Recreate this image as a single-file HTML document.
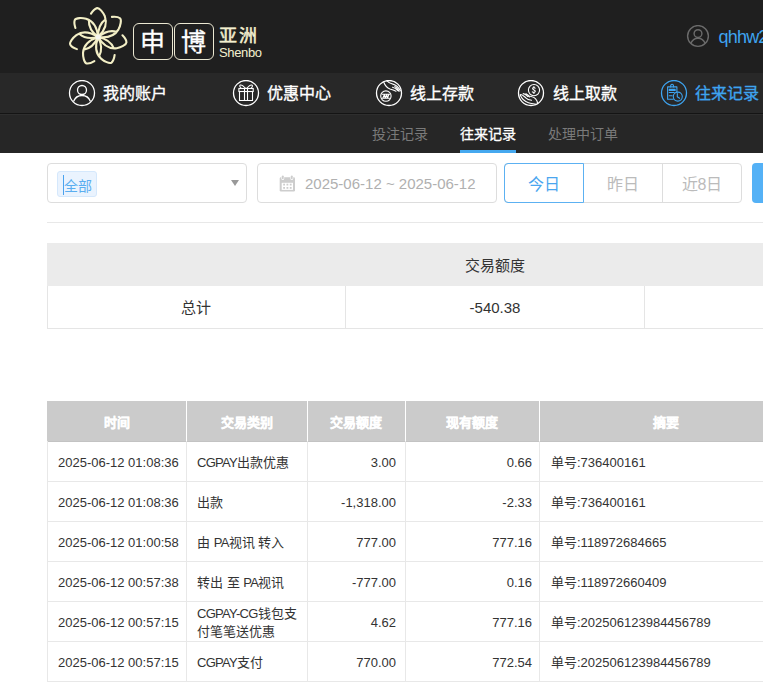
<!DOCTYPE html>
<html lang="zh-CN">
<head>
<meta charset="utf-8">
<style>
*{margin:0;padding:0;box-sizing:border-box;}
html,body{width:763px;height:686px;overflow:hidden;background:#fff;}
body{position:relative;font-family:"Liberation Sans",sans-serif;color:#333;}
.abs{position:absolute;}
#top{left:0;top:0;width:763px;height:73px;background:#1f1f1f;}
#nav{left:0;top:73px;width:763px;height:40px;background:#282828;}
#navline{left:0;top:113px;width:763px;height:1px;background:#141414;}
#navline2{left:0;top:114px;width:763px;height:1px;background:#2e2e2e;}
#sub{left:0;top:115px;width:763px;height:38px;background:#262626;}
.box{position:absolute;border:1px solid #ddd;border-radius:4px;background:#fff;}
.navt{position:absolute;top:83px;font-size:16px;line-height:22px;color:#fff;-webkit-text-stroke:0.35px currentColor;white-space:nowrap;}
.subt{position:absolute;top:124px;font-size:14px;line-height:20px;color:#7a7a7a;white-space:nowrap;}
.th{position:absolute;height:40px;display:flex;align-items:center;justify-content:center;font-size:13px;color:#fff;font-weight:bold;-webkit-text-stroke:0.3px #fff;}
.l{letter-spacing:-0.7px;}
.td{position:absolute;height:40px;display:flex;flex-direction:column;justify-content:center;font-size:13px;color:#333;white-space:nowrap;}
</style>
</head>
<body>
<div id="top" class="abs"></div>
<div id="nav" class="abs"></div>
<div id="navline" class="abs"></div>
<div id="navline2" class="abs"></div>
<div id="sub" class="abs"></div>

<!-- logo flower -->
<svg class="abs" style="left:62px;top:1px" width="72" height="72" viewBox="-36.1 -36 72 72">
  <g fill="none" stroke="#f3efc6" stroke-width="2.1" stroke-linecap="round">
    <g id="pt"><path d="M-22.7,-9 C-23.7,-12 -24,-15.5 -23.2,-17.2 C-22,-19.3 -16,-19.3 -12,-18.2 C-5.5,-16.2 -1,-10 0,0 M-9.2,-16.8 C-9.6,-11 -6.5,-5 0,0"/></g>
    <use href="#pt" transform="rotate(51.43)"/>
    <use href="#pt" transform="rotate(102.86)"/>
    <use href="#pt" transform="rotate(154.29)"/>
    <use href="#pt" transform="rotate(205.71)"/>
    <use href="#pt" transform="rotate(257.14)"/>
    <use href="#pt" transform="rotate(308.57)"/>
  </g>
  <circle cx="0" cy="0" r="2.6" fill="#f6f6f0"/>
</svg>
<!-- logo boxes -->
<div class="abs" style="left:133px;top:23px;width:40px;height:37px;border:1.6px solid #ebe8d2;border-radius:6px;color:#fff;font-size:25px;line-height:36px;text-align:center;text-indent:-2px;-webkit-text-stroke:0.3px #fff;">申</div>
<div class="abs" style="left:174px;top:23px;width:40px;height:37px;border:1.6px solid #ebe8d2;border-radius:6px;color:#fff;font-size:25px;line-height:36px;text-align:center;text-indent:-2px;-webkit-text-stroke:0.3px #fff;">博</div>
<div class="abs" style="left:218.5px;top:24px;font-size:18px;line-height:24px;color:#f3efcf;letter-spacing:2.5px;-webkit-text-stroke:0.5px #f3efcf;white-space:nowrap;">亚洲</div>
<div class="abs" style="left:219px;top:45px;font-size:13px;letter-spacing:-0.35px;line-height:16px;color:#f3efcf;white-space:nowrap;">Shenbo</div>

<!-- user top right -->
<svg class="abs" style="left:686px;top:25px" width="24" height="24" viewBox="0 0 24 24">
  <g fill="none" stroke="#6b6b6b" stroke-width="1.4">
    <circle cx="12" cy="11" r="10.4"/>
    <circle cx="12" cy="8.6" r="3.9"/>
    <path d="M4.8,18.6 C6.2,15 9,13.2 12,13.2 C15,13.2 17.8,15 19.2,18.6"/>
  </g>
</svg>
<div class="abs" style="left:718.5px;top:26px;font-size:18px;line-height:22px;color:#3ea4f0;letter-spacing:-0.8px;white-space:nowrap;">qhhw2</div>

<!-- nav icons -->
<svg class="abs" style="left:68px;top:80px" width="28" height="28" viewBox="0 0 28 28">
  <g fill="none" stroke="#fff" stroke-width="1.3">
    <circle cx="14" cy="13" r="12.5"/>
    <circle cx="14" cy="10" r="4.5"/>
    <path d="M5.5,21.5 C7,17.5 10,15.5 14,15.5 C18,15.5 21,17.5 22.5,21.5"/>
  </g>
</svg>
<div class="navt" style="left:103px;">我的账户</div>

<svg class="abs" style="left:232px;top:80px" width="28" height="28" viewBox="0 0 28 28">
  <g fill="none" stroke="#fff" stroke-width="1.3">
    <circle cx="14" cy="13" r="12.5"/>
  </g>
  <g fill="none" stroke="#fff" stroke-width="1.1">
    <rect x="6.9" y="8.5" width="14.3" height="3"/>
    <path d="M7.5,11.5 V20.5 H20.5 V11.5 M12.5,8.5 V20.5 M15.5,8.5 V20.5"/>
    <path d="M13.4,8.2 C11.5,6.2 9.6,4.6 8.4,5.1 C7.2,5.7 7.9,7.4 9.4,8.4 M14.8,8.2 C16.7,6.2 18.6,4.6 19.8,5.1 C21,5.7 20.3,7.4 18.8,8.4"/>
  </g>
</svg>
<div class="navt" style="left:267px;">优惠中心</div>

<svg class="abs" style="left:375px;top:80px" width="28" height="28" viewBox="0 0 28 28">
  <g fill="none" stroke="#fff" stroke-width="1.3">
    <circle cx="14" cy="13" r="12.5"/>
  </g>
  <g fill="none" stroke="#fff" stroke-width="1.1" stroke-linecap="round" stroke-linejoin="round">
    <circle cx="10.9" cy="16.1" r="5.2"/>
    <path d="M7.3,14.3 H14.5 M7.3,18.3 H14.5 M7.8,18.2 L9.4,14.4 L10.2,18.2 L11.7,14.4 L12.4,18.2 L13.9,14.4"/>
    <path d="M8.8,2.3 C10,5.5 12,8 15,9 C17,9.6 19,10.3 21,11.2"/>
    <path d="M12,0.8 C13.5,2.6 15.5,3.6 18.5,4.4 C21.5,5.3 23.8,7.8 25.4,10.8"/>
    <path d="M17.5,7.2 C19.3,7.6 21,8.6 22.6,10.4 L24.2,11.2 M19.8,6.6 C21.5,7.5 22.6,8.8 23.8,10.5"/>
  </g>
</svg>
<div class="navt" style="left:410px;">线上存款</div>

<svg class="abs" style="left:517px;top:80px" width="28" height="28" viewBox="0 0 28 28">
  <g fill="none" stroke="#fff" stroke-width="1.3">
    <circle cx="14" cy="13" r="12.5"/>
  </g>
  <g fill="none" stroke="#fff" stroke-width="1.1" stroke-linecap="round" stroke-linejoin="round">
    <circle cx="17" cy="10.1" r="5.6"/>
    <path d="M18.1,8.2 C17.6,7.4 15.6,7.4 15.6,8.6 C15.6,10 18.3,9.8 18.3,11.3 C18.3,12.6 16.2,12.7 15.3,11.8 M16.9,6.5 V7.4 M16.9,12.7 V13.5"/>
    <path d="M3.2,15 C4.5,18.2 7.8,21.6 11.5,22.8 C14,23.6 16.5,23.8 19,24.4"/>
    <path d="M10.5,16 C13.5,16.2 16.8,17 18.6,18.8 C19.8,20 20.5,21.8 20.6,23.6"/>
    <path d="M3.6,14.6 C5,14.2 7.2,16.4 8.8,17.8 C9.8,18.8 11.5,19.8 14.5,20.3 M6.2,13.6 C7.6,13.6 9.6,15.3 10.7,16.5 M9,13.8 C10.5,14.4 12,16 12.4,17"/>
  </g>
</svg>
<div class="navt" style="left:553px;">线上取款</div>

<svg class="abs" style="left:660px;top:80px" width="28" height="28" viewBox="0 0 28 28">
  <g fill="none" stroke="#3ea4f0" stroke-width="1.3">
    <circle cx="14" cy="13" r="12.5"/>
  </g>
  <g fill="none" stroke="#3ea4f0" stroke-width="1.1" stroke-linecap="round" stroke-linejoin="round">
    <path d="M13.2,19.2 H7.6 V6.9 H16.9 V12.2"/>
    <path d="M10.6,6.9 C10.6,5.5 11.2,4.2 12.1,4.2 C13,4.2 13.6,5.5 13.6,6.9"/>
    <path d="M9.2,9.4 H15.2 M9.2,10.4 H15.2 M9.2,12.5 H14.2 M9.2,15.8 H12.2"/>
    <circle cx="17.8" cy="16.6" r="4.5"/>
    <path d="M17.3,13.6 V16.8 L19.6,18.3"/>
  </g>
</svg>
<div class="navt" style="left:695px;color:#3ea4f0;">往来记录</div>

<!-- subnav -->
<div class="subt" style="left:372px;">投注记录</div>
<div class="subt" style="left:460px;color:#fff;-webkit-text-stroke:0.3px #fff;">往来记录</div>
<div class="abs" style="left:460px;top:150px;width:56px;height:3px;background:#45a8ef;"></div>
<div class="subt" style="left:548px;">处理中订单</div>

<!-- filter row -->
<div class="box" style="left:47px;top:163px;width:200px;height:40px;"></div>
<div class="abs" style="left:57px;top:171px;width:40px;height:26px;background:#eaf3fe;border:1px solid #d5e8fc;border-radius:3px;"></div>
<div class="abs" style="left:63px;top:175px;width:1px;height:20px;background:#4aa3ef;"></div>
<div class="abs" style="left:64px;top:176px;font-size:14px;line-height:20px;color:#5aaef0;">全部</div>
<div class="abs" style="left:231px;top:180px;width:0;height:0;border-left:4px solid transparent;border-right:4px solid transparent;border-top:6px solid #999;"></div>

<div class="box" style="left:257px;top:163px;width:240px;height:40px;"></div>
<svg class="abs" style="left:279px;top:175px" width="17" height="17" viewBox="0 0 17 17">
  <rect x="0.7" y="2.3" width="15.3" height="14.2" rx="1.3" fill="#cdcdcd"/>
  <rect x="2.7" y="7.8" width="11.3" height="7.1" fill="#fff"/>
  <g fill="#cdcdcd">
    <rect x="4.2" y="8.7" width="1.8" height="1.8"/><rect x="7.5" y="8.7" width="1.8" height="1.8"/><rect x="10.8" y="8.7" width="1.8" height="1.8"/>
    <rect x="4.2" y="12" width="1.8" height="1.8"/><rect x="7.5" y="12" width="1.8" height="1.8"/><rect x="10.8" y="12" width="1.8" height="1.8"/>
  </g>
  <rect x="2.4" y="-0.5" width="2.8" height="5.6" rx="1.4" fill="#fff"/>
  <rect x="11.4" y="-0.5" width="2.8" height="5.6" rx="1.4" fill="#fff"/>
  <rect x="2.9" y="0.4" width="1.8" height="3.8" rx="0.9" fill="#cdcdcd"/>
  <rect x="11.9" y="0.4" width="1.8" height="3.8" rx="0.9" fill="#cdcdcd"/>
</svg>
<div class="abs" style="left:305px;top:173.5px;font-size:15px;line-height:20px;color:#b0b0b0;white-space:nowrap;">2025-06-12 ~ 2025-06-12</div>

<div class="abs" style="left:504px;top:163px;width:238px;height:40px;border:1px solid #ddd;border-radius:4px;"></div>
<div class="abs" style="left:583px;top:163px;width:1px;height:40px;background:#ddd;"></div>
<div class="abs" style="left:662px;top:163px;width:1px;height:40px;background:#ddd;"></div>
<div class="abs" style="left:504px;top:163px;width:80px;height:40px;border:1px solid #5cb1f2;border-radius:4px 0 0 4px;"></div>
<div class="abs" style="left:504px;top:174.5px;width:80px;text-align:center;font-size:16px;line-height:20px;color:#4aa6ef;">今日</div>
<div class="abs" style="left:583px;top:174.5px;width:80px;text-align:center;font-size:16px;line-height:20px;color:#bbb;">昨日</div>
<div class="abs" style="left:662px;top:174.5px;width:80px;text-align:center;font-size:16px;line-height:20px;color:#bbb;">近8日</div>
<div class="abs" style="left:752px;top:163px;width:20px;height:40px;background:#54b1f6;border-radius:4px;"></div>

<div class="abs" style="left:47px;top:222px;width:716px;height:1px;background:#e8e8e8;"></div>

<!-- summary table -->
<div class="abs" style="left:47px;top:243px;width:716px;height:43px;background:#ebebeb;"></div>
<div class="abs" style="left:345px;top:256px;width:300px;text-align:center;font-size:15px;line-height:20px;color:#333;">交易额度</div>
<div class="abs" style="left:47px;top:286px;width:716px;height:43px;border-left:1px solid #e5e5e5;border-bottom:1px solid #e5e5e5;"></div>
<div class="abs" style="left:345px;top:286px;width:1px;height:42px;background:#e5e5e5;"></div>
<div class="abs" style="left:644px;top:286px;width:1px;height:42px;background:#e5e5e5;"></div>
<div class="abs" style="left:47px;top:298px;width:298px;text-align:center;font-size:15px;line-height:20px;color:#333;">总计</div>
<div class="abs" style="left:345px;top:298px;width:300px;text-align:center;font-size:15px;line-height:20px;color:#333;">-540.38</div>

<!-- main table -->
<!--MT-->
<div class="abs" style="left:47px;top:401px;width:716px;height:41px;background:#cbcbcb;"></div>
<div class="abs" style="left:47px;top:441px;width:716px;height:1px;background:#c3c3c3;"></div>
<div class="abs" style="left:186px;top:401px;width:1px;height:40px;background:#fff;"></div>
<div class="abs" style="left:307px;top:401px;width:1px;height:40px;background:#fff;"></div>
<div class="abs" style="left:405px;top:401px;width:1px;height:40px;background:#fff;"></div>
<div class="abs" style="left:539px;top:401px;width:1px;height:40px;background:#fff;"></div>
<div class="th" style="left:47px;top:401px;width:139px;">时间</div>
<div class="th" style="left:186px;top:401px;width:121px;">交易类别</div>
<div class="th" style="left:307px;top:401px;width:98px;">交易额度</div>
<div class="th" style="left:405px;top:401px;width:134px;">现有额度</div>
<div class="th" style="left:539px;top:401px;width:253px;">摘要</div>
<div class="abs" style="left:47px;top:441px;width:1px;height:240px;background:#e8e8e8;"></div>
<div class="abs" style="left:186px;top:441px;width:1px;height:240px;background:#e8e8e8;"></div>
<div class="abs" style="left:307px;top:441px;width:1px;height:240px;background:#e8e8e8;"></div>
<div class="abs" style="left:405px;top:441px;width:1px;height:240px;background:#e8e8e8;"></div>
<div class="abs" style="left:539px;top:441px;width:1px;height:240px;background:#e8e8e8;"></div>
<div class="abs" style="left:47px;top:481px;width:716px;height:1px;background:#e8e8e8;"></div>
<div class="abs" style="left:47px;top:521px;width:716px;height:1px;background:#e8e8e8;"></div>
<div class="abs" style="left:47px;top:561px;width:716px;height:1px;background:#e8e8e8;"></div>
<div class="abs" style="left:47px;top:601px;width:716px;height:1px;background:#e8e8e8;"></div>
<div class="abs" style="left:47px;top:641px;width:716px;height:1px;background:#e8e8e8;"></div>
<div class="abs" style="left:47px;top:681px;width:716px;height:1px;background:#e8e8e8;"></div>
<div class="td" style="left:47px;top:443px;width:139px;text-align:left;padding-left:11px;"><span style="line-height:20px">2025-06-12 01:08:36</span></div>
<div class="td" style="left:186px;top:443px;width:121px;text-align:left;padding-left:11px;"><span style="line-height:20px"><span class=l>CGPAY</span>出款优惠</span></div>
<div class="td" style="left:307px;top:443px;width:98px;text-align:right;padding-right:9px;"><span style="line-height:20px">3.00</span></div>
<div class="td" style="left:405px;top:443px;width:134px;text-align:right;padding-right:7px;"><span style="line-height:20px">0.66</span></div>
<div class="td" style="left:539px;top:443px;width:253px;text-align:left;padding-left:12px;"><span style="line-height:20px">单号:736400161</span></div>
<div class="td" style="left:47px;top:483px;width:139px;text-align:left;padding-left:11px;"><span style="line-height:20px">2025-06-12 01:08:36</span></div>
<div class="td" style="left:186px;top:483px;width:121px;text-align:left;padding-left:11px;"><span style="line-height:20px">出款</span></div>
<div class="td" style="left:307px;top:483px;width:98px;text-align:right;padding-right:9px;"><span style="line-height:20px">-1,318.00</span></div>
<div class="td" style="left:405px;top:483px;width:134px;text-align:right;padding-right:7px;"><span style="line-height:20px">-2.33</span></div>
<div class="td" style="left:539px;top:483px;width:253px;text-align:left;padding-left:12px;"><span style="line-height:20px">单号:736400161</span></div>
<div class="td" style="left:47px;top:523px;width:139px;text-align:left;padding-left:11px;"><span style="line-height:20px">2025-06-12 01:00:58</span></div>
<div class="td" style="left:186px;top:523px;width:121px;text-align:left;padding-left:11px;"><span style="line-height:20px">由 <span class=l>PA</span>视讯 转入</span></div>
<div class="td" style="left:307px;top:523px;width:98px;text-align:right;padding-right:9px;"><span style="line-height:20px">777.00</span></div>
<div class="td" style="left:405px;top:523px;width:134px;text-align:right;padding-right:7px;"><span style="line-height:20px">777.16</span></div>
<div class="td" style="left:539px;top:523px;width:253px;text-align:left;padding-left:12px;"><span style="line-height:20px">单号:118972684665</span></div>
<div class="td" style="left:47px;top:563px;width:139px;text-align:left;padding-left:11px;"><span style="line-height:20px">2025-06-12 00:57:38</span></div>
<div class="td" style="left:186px;top:563px;width:121px;text-align:left;padding-left:11px;"><span style="line-height:20px">转出 至 <span class=l>PA</span>视讯</span></div>
<div class="td" style="left:307px;top:563px;width:98px;text-align:right;padding-right:9px;"><span style="line-height:20px">-777.00</span></div>
<div class="td" style="left:405px;top:563px;width:134px;text-align:right;padding-right:7px;"><span style="line-height:20px">0.16</span></div>
<div class="td" style="left:539px;top:563px;width:253px;text-align:left;padding-left:12px;"><span style="line-height:20px">单号:118972660409</span></div>
<div class="td" style="left:47px;top:603px;width:139px;text-align:left;padding-left:11px;"><span style="line-height:20px">2025-06-12 00:57:15</span></div>
<div class="td" style="left:186px;top:603px;width:121px;text-align:left;padding-left:11px;"><span style="line-height:18px"><span class=l>CGPAY-CG</span>钱包支<br>付笔笔送优惠</span></div>
<div class="td" style="left:307px;top:603px;width:98px;text-align:right;padding-right:9px;"><span style="line-height:20px">4.62</span></div>
<div class="td" style="left:405px;top:603px;width:134px;text-align:right;padding-right:7px;"><span style="line-height:20px">777.16</span></div>
<div class="td" style="left:539px;top:603px;width:253px;text-align:left;padding-left:12px;"><span style="line-height:20px">单号:202506123984456789</span></div>
<div class="td" style="left:47px;top:643px;width:139px;text-align:left;padding-left:11px;"><span style="line-height:20px">2025-06-12 00:57:15</span></div>
<div class="td" style="left:186px;top:643px;width:121px;text-align:left;padding-left:11px;"><span style="line-height:20px"><span class=l>CGPAY</span>支付</span></div>
<div class="td" style="left:307px;top:643px;width:98px;text-align:right;padding-right:9px;"><span style="line-height:20px">770.00</span></div>
<div class="td" style="left:405px;top:643px;width:134px;text-align:right;padding-right:7px;"><span style="line-height:20px">772.54</span></div>
<div class="td" style="left:539px;top:643px;width:253px;text-align:left;padding-left:12px;"><span style="line-height:20px">单号:202506123984456789</span></div>
<!--/MT-->
</body>
</html>
